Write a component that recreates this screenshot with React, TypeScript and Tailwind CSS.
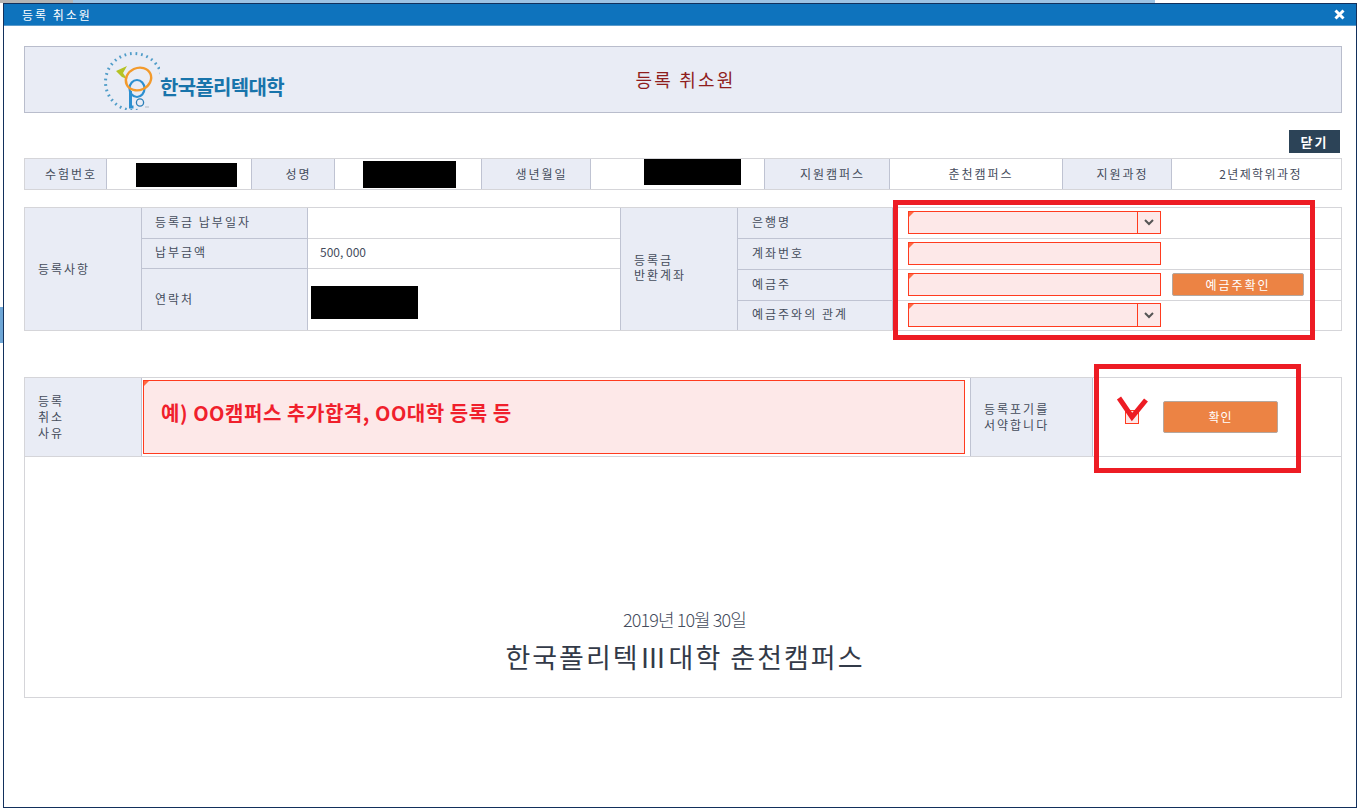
const labelLine = "border-[#bfc3d2]";

// pale red required field with the little corner marker
function Field({ select = false, className = "" }: { select?: boolean; className?: string }) {
  return (
    <div className={`relative w-[253px] border border-[#ff3b1f] bg-[#fde8e8] flex justify-end ${className}`}>
      <div className="absolute left-0 top-0 w-0 h-0 border-t-[5px] border-r-[5px] border-t-[#ff6a45] border-r-transparent" />
      {select && (
        <div className="w-[23px] border-l border-[#ff3b1f] flex items-center justify-center">
          <svg width="10" height="7" viewBox="0 0 10 7" fill="none" stroke="#555" strokeWidth="2">
            <path d="M1 1l4 4 4-4" />
          </svg>
        </div>
      )}
    </div>
  );
}

function Label({ children, className = "" }: { children: React.ReactNode; className?: string }) {
  return (
    <div className={`bg-[#e9ecf5] border-r ${labelLine} flex items-center tracking-[2px] ${className}`}>
      {children}
    </div>
  );
}

function Redacted({ className }: { className: string }) {
  return <div className={`bg-black ${className}`} />;
}

// ring of short radial ticks round the logo
const ticks = Array.from({ length: 24 }, (_, i) => {
  const a = ((-18 - i * 11.2) * Math.PI) / 180;
  return {
    x1: 134 + 27 * Math.cos(a),
    y1: 77 + 27 * Math.sin(a),
    x2: 134 + 30 * Math.cos(a),
    y2: 77 + 30 * Math.sin(a),
  };
});

function Logo() {
  return (
    <svg width="60" height="60" viewBox="100 45 60 60" className="shrink-0">
      {ticks.map((t, i) => (
        <line key={i} x1={t.x1} y1={t.y1} x2={t.x2} y2={t.y2} stroke="#4f9cc8" strokeWidth="1.7" />
      ))}
      <path d="M116 66l11-5-4 7 4 6-5-2z" fill="#b5c224" />
      <ellipse cx="137" cy="83.5" rx="7.5" ry="8.5" fill="none" stroke="#2c8fd0" strokeWidth="2.2" />
      <path d="M130.5 86v16h3" fill="none" stroke="#2c8fd0" strokeWidth="3" />
      <circle cx="140" cy="97.5" r="3.6" fill="none" stroke="#2c7fb8" strokeWidth="1.3" />
      <path d="M145 102h4" stroke="#b0b8c4" strokeWidth="1" />
      <ellipse
        cx="138.5"
        cy="74"
        rx="13"
        ry="11"
        fill="none"
        stroke="#f39a2c"
        strokeWidth="2.4"
        transform="rotate(-25 138.5 74)"
      />
    </svg>
  );
}

export default function App() {
  return (
    <div className="relative w-[1361px] h-[811px] overflow-hidden bg-white text-[12px] text-[#454c5c] font-['Noto_Sans_CJK_KR','Noto_Sans',sans-serif]">
      {/* what shows behind the popup */}
      <div className="flex h-[3px]">
        <div className="w-[73px] bg-[#b4b4b4]" />
        <div className="w-[1082px] bg-[#9cc3e4]" />
      </div>

      <div className="flex">
        <div className="w-[3px] pt-[304px]">
          <div className="h-[36px] bg-[#6ea6d6]" />
        </div>

        {/* popup window */}
        <div className="w-[1354px] h-[805px] border border-[#12305c] bg-white">
          <div className="h-[22px] bg-[#0e73bd] border-b border-[#5b9bcb] flex items-center justify-between pl-[18px] pr-[11px] text-white tracking-[2px] leading-none">
            <span>등록 취소원</span>
            <svg width="11" height="11" viewBox="0 0 11 11" stroke="#fff" strokeWidth="3">
              <path d="M1.5 1.5l8 8M9.5 1.5l-8 8" />
            </svg>
          </div>

          <div className="pl-5 w-[1338px]">
            {/* heading */}
            <div className="mt-5 h-[67px] border border-[#b9bdcc] bg-[#e9ecf5] grid grid-cols-[1fr_auto_1fr] items-center">
              <div className="flex items-center pl-[75px]">
                <Logo />
                <span className="text-[20px] font-bold text-[#1874ab] tracking-[-0.7px] mt-[14px] whitespace-nowrap">
                  한국폴리텍대학
                </span>
              </div>
              <div className="text-[18px] text-[#8f1d1d] tracking-[2.2px] ml-[5px]">등록 취소원</div>
              <div />
            </div>

            <div className="mt-[17px] flex justify-end pr-[2px]">
              <button className="w-[51px] h-[23px] bg-[#2c4357] text-white font-bold text-[13px] tracking-[2px]">닫기</button>
            </div>

            {/* applicant row */}
            <div className="mt-[5px] h-[32px] border border-[#d5d5d9] grid grid-cols-[82px_145px_83px_147px_109px_174px_125px_173px_109px_1fr]">
              <Label className="justify-center pl-[11px] pb-px">수험번호</Label>
              <div className={`border-r ${labelLine} pl-[29px] pt-1`}>
                <Redacted className="w-[101px] h-[24px]" />
              </div>
              <Label className="justify-center pl-[11px] pb-px">성명</Label>
              <div className={`border-r ${labelLine} pl-[28px] pt-[2px]`}>
                <Redacted className="w-[93px] h-[27px]" />
              </div>
              <Label className="justify-center pl-[11px] pb-px">생년월일</Label>
              <div className={`border-r ${labelLine} pl-[53px]`}>
                <Redacted className="w-[97px] h-[26px]" />
              </div>
              <Label className="justify-center pl-[11px] pb-px">지원캠퍼스</Label>
              <div className={`border-r ${labelLine} flex items-center justify-center tracking-[2px] pl-[10px] pb-px`}>춘천캠퍼스</div>
              <Label className="justify-center pl-[11px] pb-px">지원과정</Label>
              <div className="flex items-center justify-center tracking-[1.4px] pl-[8px] pb-px">2년제학위과정</div>
            </div>

            {/* registration + refund account */}
            <div className="mt-[17px] h-[124px] border border-[#d5d5d9] flex">
              <Label className="w-[117px] pl-[13px]">등록사항</Label>
              <div className="w-[166px] grid grid-rows-[31px_30px_1fr]">
                <Label className="pl-[13px] pb-[3px] border-b">등록금 납부일자</Label>
                <Label className="pl-[13px] pb-[3px] border-b">납부금액</Label>
                <Label className="pl-[13px] pb-[2px]">연락처</Label>
              </div>
              <div className="w-[313px] grid grid-rows-[31px_30px_1fr] border-r border-[#bfc3d2]">
                <div className="border-b border-[#d5d5d9]" />
                <div className="border-b border-[#d5d5d9] flex items-center pl-[12px] pb-[3px]">500, 000</div>
                <div className="pl-[3px] pt-[17px]">
                  <Redacted className="w-[107px] h-[33px]" />
                </div>
              </div>
              <Label className="w-[117px] pl-[13px] pb-[4px] leading-[15px]">
                <span>
                  등록금
                  <br />
                  반환계좌
                </span>
              </Label>
              <div className="w-[155px] grid grid-rows-[31px_31px_31px_1fr]">
                <Label className="pl-[14px] pb-[3px] border-b">은행명</Label>
                <Label className="pl-[14px] pb-[2px] border-b">계좌번호</Label>
                <Label className="pl-[14px] pb-[2px] border-b">예금주</Label>
                <Label className="pl-[14px] pb-[3px]">예금주와의 관계</Label>
              </div>
              <div className="flex-1 grid grid-rows-[31px_31px_31px_1fr]">
                <div className="border-b border-[#d5d5d9] pl-[15px] pt-[3px]">
                  <Field select className="h-[23px]" />
                </div>
                <div className="border-b border-[#d5d5d9] pl-[15px] pt-[3px]">
                  <Field className="h-[23px]" />
                </div>
                <div className="border-b border-[#d5d5d9] pl-[15px] pt-[3px] flex">
                  <Field className="h-[23px]" />
                  <button className="ml-[11px] w-[132px] h-[23px] rounded-[2px] border border-[#b5a79e] bg-[#ec8344] text-white tracking-[2px]">
                    예금주확인
                  </button>
                </div>
                <div className="pl-[15px] pt-[2px]">
                  <Field select className="h-[24px]" />
                </div>
              </div>
            </div>

            {/* cancel reason */}
            <div className="mt-[46px] h-[321px] border border-[#d5d5d9] flex flex-col">
              <div className="h-[79px] border-b border-[#d5d5d9] flex">
                <Label className="w-[117px] pl-[13px] leading-[16px]">
                  <span>
                    등록
                    <br />
                    취소
                    <br />
                    사유
                  </span>
                </Label>
                <div className="w-[828px] pl-[1px] pr-[5px] pt-[2px]">
                  <div className="relative h-[74px] border border-[#ff3b1f] bg-[#fde8e8] pl-[17px] pt-[17px] text-[20px] leading-[32px] font-bold text-[#f0202c] tracking-[0.55px] whitespace-nowrap">
                    <div className="absolute left-0 top-0 w-0 h-0 border-t-[5px] border-r-[5px] border-t-[#ff6a45] border-r-transparent" />
                    <span className="block -mt-[1px]">예) OO캠퍼스 추가합격, OO대학 등록 등</span>
                  </div>
                </div>
                <Label className="w-[123px] pl-[13px] leading-[16px] border-l">
                  <span>
                    등록포기를
                    <br />
                    서약합니다
                  </span>
                </Label>
                <div className="flex-1 flex items-start pl-[32px] pt-[32px]">
                  <div className="w-[14px] h-[14px] border border-[#ff3b1f] bg-[#fde8e8]" />
                  <button className="ml-[24px] -mt-[9px] w-[115px] h-[32px] rounded-[2px] border border-[#b5a79e] bg-[#ec8344] text-white tracking-[1px]">
                    확인
                  </button>
                </div>
              </div>
              <div className="flex-1 flex flex-col items-center pt-[150px]">
                <div className="ml-[3px] text-[18px] font-light leading-[24px] tracking-[-0.9px]">2019년 10월 30일</div>
                <div className="ml-[4px] mt-[8px] text-[27px] leading-[36px] text-[#333a48] tracking-[2px]">한국폴리텍Ⅲ대학 춘천캠퍼스</div>
              </div>
            </div>
          </div>
        </div>
      </div>

      {/* red annotations drawn on top of the screenshot */}
      <div className="absolute left-[893px] top-[200px] w-[422px] h-[140px] border-[5px] border-[#ed1c24]" />
      <div className="absolute left-[1094px] top-[364px] w-[207px] h-[109px] border-[5px] border-[#ed1c24]" />
      <svg className="absolute left-[1116px] top-[396px]" width="34" height="28" viewBox="0 0 34 28" fill="none" stroke="#ed1c24" strokeWidth="5">
        <path d="M3 2l13 19L30 4" />
      </svg>
    </div>
  );
}
